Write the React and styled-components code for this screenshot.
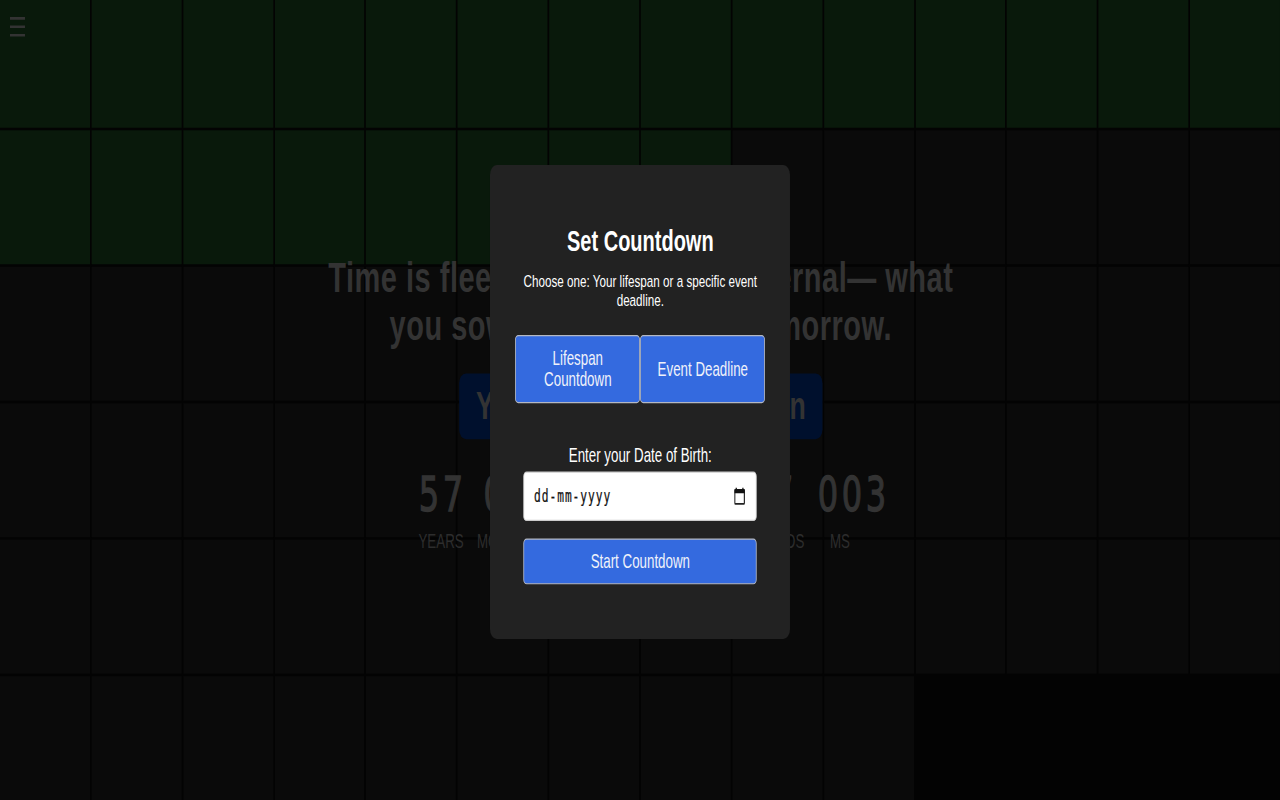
import React from 'react';
import styled, { createGlobalStyle } from 'styled-components';

const Global = createGlobalStyle`
  * { box-sizing: border-box; }
  html, body { margin: 0; background: #020202; overflow: hidden; }
  body { font-family: Arial, "Liberation Sans", sans-serif; }
`;

const Viewport = styled.div`
  width: 1280px;
  height: 800px;
  overflow: hidden;
`;

const Stage = styled.div`
  position: relative;
  width: 1536px;
  height: 644.8px;
  overflow: hidden;
  transform: scale(0.83333, 1.2407);
  transform-origin: 0 0;
  background: #030303;
`;

const YearGrid = styled.div`
  position: absolute;
  inset: 0;
  padding-top: 2.9px;
  display: grid;
  grid-template-columns: repeat(14, 1fr);
  grid-auto-rows: 107.86px;
  gap: 2px;
  align-content: center;
`;

const Year = styled.div`
  background: ${(p) => (p.$lived ? '#09190b' : '#0a0a0a')};
`;

const MenuButton = styled.div`
  position: absolute;
  left: 12px;
  top: 13px;
  line-height: 0;
`;

const Hero = styled.main`
  position: absolute;
  inset: 0;
  padding: 203.1px 0 0 2px;
  display: flex;
  flex-direction: column;
  align-items: center;
  color: #333;
`;

const QuoteLine = styled.div`
  width: ${(p) => p.$width}px;
  display: flex;
  justify-content: space-between;
  font-size: 34.8px;
  font-weight: 700;
  line-height: 39.3px;
  letter-spacing: 0.6px;
  white-space: nowrap;
`;

const Badge = styled.div`
  margin: 19.2px 0 21.7px;
  width: 436px;
  height: 53.5px;
  border-radius: 8px;
  background: #00102d;
  font-size: 32px;
  font-weight: 700;
  line-height: 53px;
  text-align: center;
  white-space: nowrap;
`;

const Clock = styled.div`
  width: 539px;
  display: flex;
  justify-content: space-between;
`;

const Unit = styled.div`
  min-width: 60px;
  display: flex;
  flex-direction: column;
  align-items: center;
`;

const Digits = styled.div`
  align-self: ${(p) => (p.$wide ? 'flex-start' : 'center')};
  width: ${(p) => (p.$wide ? '60px' : 'auto')};
  padding-left: 3px;
  font-family: "DejaVu Sans", sans-serif;
  font-size: 38.5px;
  line-height: 46px;
  letter-spacing: 4.3px;
  -webkit-text-stroke: 1.1px #333;
`;

const UnitLabel = styled.div`
  margin: 6px 1px 0 0;
  font-size: 16px;
  line-height: 18px;
  color: #2d2d2d;
`;

const ModalLayer = styled.div`
  position: absolute;
  inset: 0;
  padding: 2.9px 0 0 0.8px;
  display: flex;
  align-items: center;
  justify-content: center;
`;

const Modal = styled.section`
  width: 360px;
  height: 381.8px;
  padding: 47px 30px 0;
  border-radius: 8px;
  background: #222;
  color: #fff;
  display: flex;
  flex-direction: column;
  align-items: center;
  text-align: center;
`;

const Title = styled.h2`
  margin: 0;
  font-size: 24px;
  line-height: 28px;
`;

const Intro = styled.p`
  margin: 10px 0 19.9px;
  width: 290px;
  font-size: 14px;
  line-height: 16px;
`;

const Choices = styled.div`
  display: flex;
  width: 300px;
`;

const Button = styled.button`
  width: ${(p) => p.$width}px;
  height: ${(p) => p.$height}px;
  margin: 0;
  padding: 0 20px;
  border: 0.8px solid #b4b8c2;
  border-radius: 4px;
  background: #346adf;
  color: #f0f2fa;
  font: 16px/17.6px Arial, "Liberation Sans", sans-serif;
`;

const Choice = styled(Button)`
  padding: 0 15px;
`;

const Label = styled.label`
  margin: 33.2px 0 4px;
  font-size: 16px;
  line-height: 18px;
`;

const DateField = styled.div`
  width: 280px;
  height: 39.8px;
  margin-bottom: 13.7px;
  padding: 0 13px 0 11.5px;
  display: flex;
  align-items: center;
  justify-content: space-between;
  border: 0.8px solid #ccc;
  border-radius: 4px;
  background: #fff;
  color: #111;
`;

const DateText = styled.span`
  font-family: "DejaVu Sans Mono", monospace;
  font-size: 13.5px;
  letter-spacing: 1.12px;
  -webkit-text-stroke: 0.2px #111;
`;

const UNITS = [
  ['57', 'YEARS'],
  ['00', 'MONTHS'],
  ['12', 'DAYS'],
  ['08', 'HOURS'],
  ['24', 'MINUTES'],
  ['37', 'SECONDS'],
  ['003', 'MS'],
];

const TOTAL_YEARS = 80;
const LIVED_YEARS = 22;

function MenuIcon() {
  return (
    <svg width="18" height="18" viewBox="0 0 18 18" stroke="#333" strokeWidth="2.1">
      <path d="M0 1.8h18M0 8.6h18M0 15.4h18" />
    </svg>
  );
}

function CalendarIcon() {
  return (
    <svg width="13" height="14" viewBox="0 0 13 14" fill="none">
      <path d="M2.5 0v3M10.5 0v3" stroke="#111" strokeWidth="1.5" />
      <rect x="0.75" y="1.8" width="11.5" height="11.4" rx="0.8" stroke="#222" strokeWidth="1.4" />
      <path d="M0.3 1.4h12.4v3.2H0.3z" fill="#111" />
    </svg>
  );
}

export default function App() {
  return (
    <Viewport>
      <Global />
      <Stage>
        <YearGrid>
          {Array.from({ length: TOTAL_YEARS }, (_, i) => (
            <Year key={i} $lived={i < LIVED_YEARS} />
          ))}
        </YearGrid>
        <MenuButton>
          <MenuIcon />
        </MenuButton>
        <Hero>
          <QuoteLine $width={750}>
            <span>Time is fleeting, but</span>
            <span>it is eternal— what</span>
          </QuoteLine>
          <QuoteLine $width={603}>
            <span>you sow today,</span>
            <span>reap tomorrow.</span>
          </QuoteLine>
          <Badge>Your Lifespan Countdown</Badge>
          <Clock>
            {UNITS.map(([value, label]) => (
              <Unit key={label}>
                <Digits $wide={value.length > 2}>{value}</Digits>
                <UnitLabel>{label}</UnitLabel>
              </Unit>
            ))}
          </Clock>
        </Hero>
        <ModalLayer>
          <Modal>
            <Title>Set Countdown</Title>
            <Intro>Choose one: Your lifespan or a specific event deadline.</Intro>
            <Choices>
              <Choice $width={150} $height={55.2}>Lifespan Countdown</Choice>
              <Choice $width={150} $height={55.2}>Event Deadline</Choice>
            </Choices>
            <Label>Enter your Date of Birth:</Label>
            <DateField>
              <DateText>dd-mm-yyyy</DateText>
              <CalendarIcon />
            </DateField>
            <Button $width={280} $height={37.6}>Start Countdown</Button>
          </Modal>
        </ModalLayer>
      </Stage>
    </Viewport>
  );
}
